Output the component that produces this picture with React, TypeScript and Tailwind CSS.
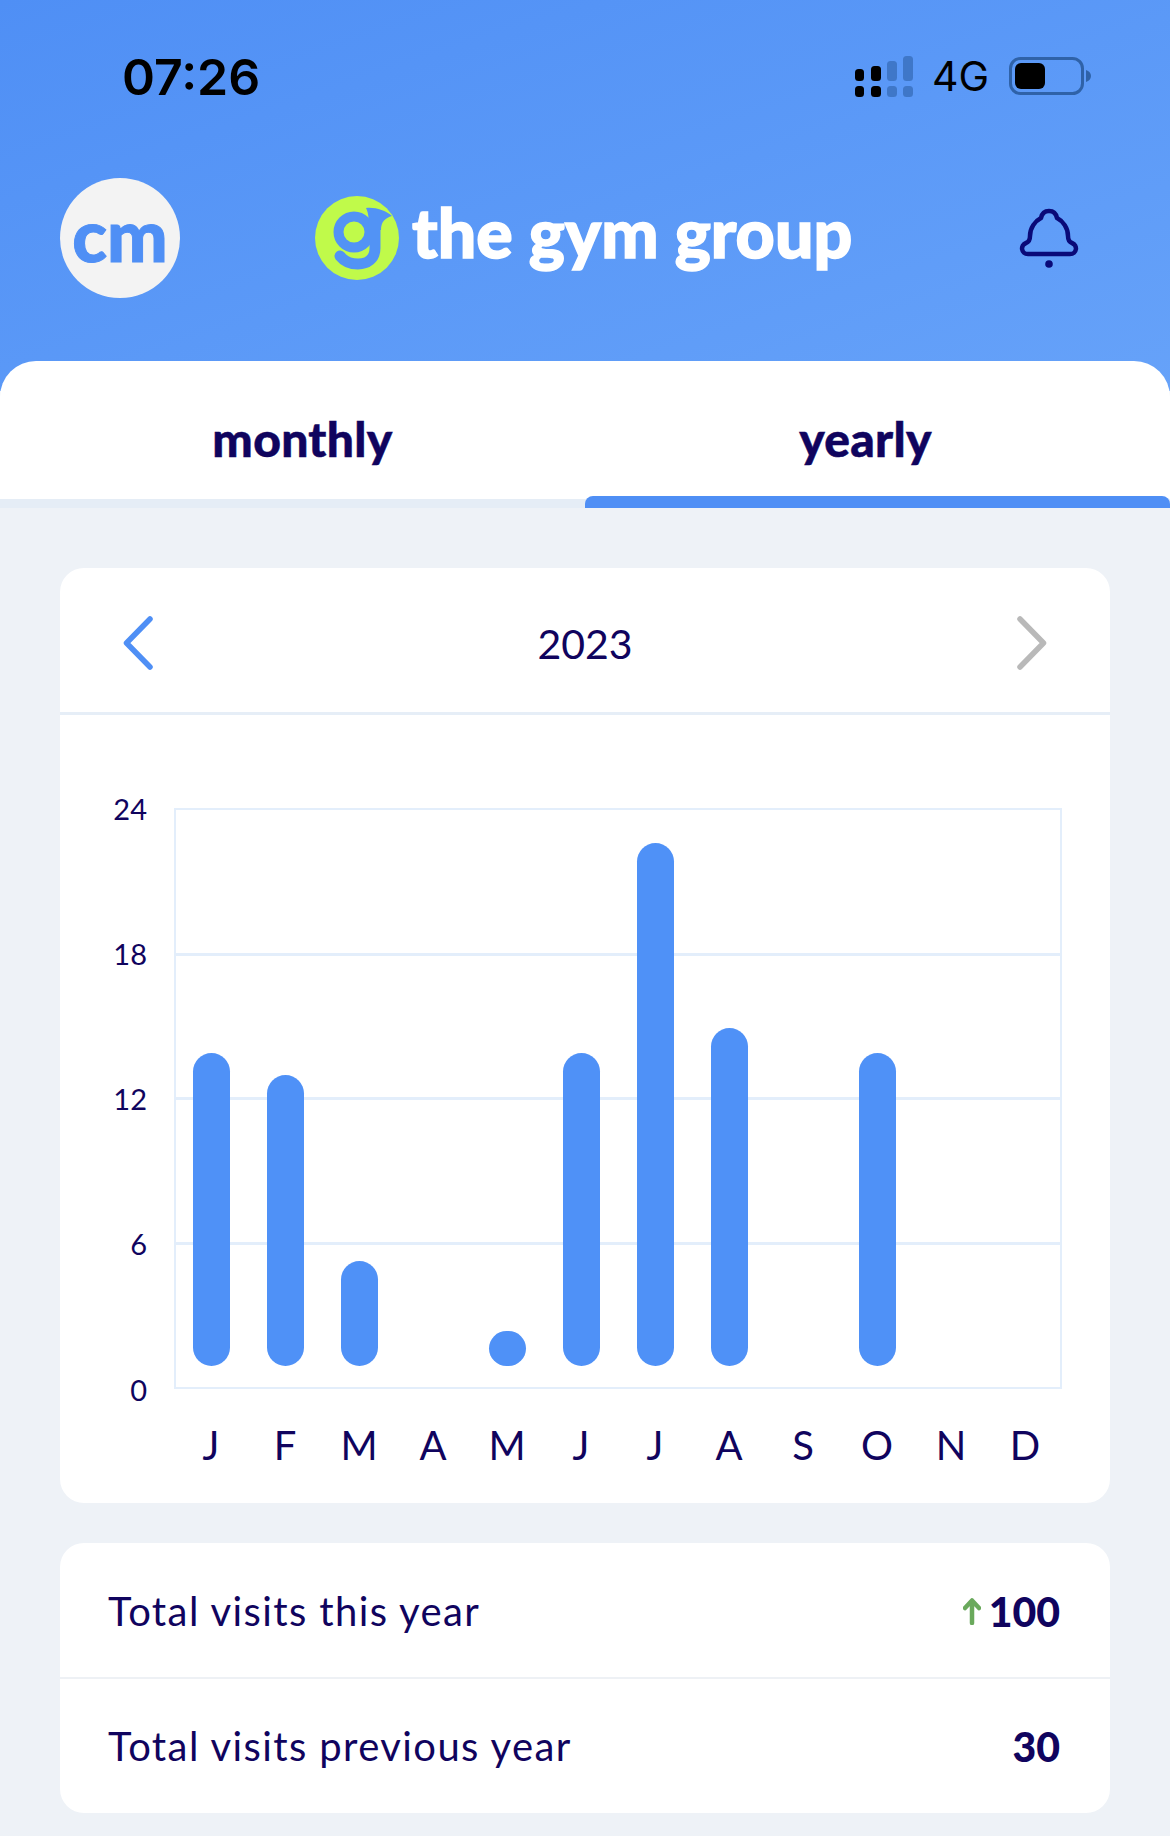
const months = ["J", "F", "M", "A", "M", "J", "J", "A", "S", "O", "N", "D"];
const bars = [
  "h-[313px]",
  "h-[291px]",
  "h-[105px]",
  "",
  "h-[35px]",
  "h-[313px]",
  "h-[523px]",
  "h-[338px]",
  "",
  "h-[313px]",
  "",
  "",
];
const yTicks = ["24", "18", "12", "6", "0"];

function Signal() {
  return (
    <svg width="58" height="41" viewBox="0 0 58 41">
      <rect x="0" y="13" width="9" height="12" rx="3.5" fill="#000" />
      <rect x="0" y="30" width="9" height="11" rx="3.5" fill="#000" />
      <rect x="16" y="10" width="10" height="15" rx="3.5" fill="#000" />
      <rect x="16" y="30" width="10" height="11" rx="3.5" fill="#000" />
      <rect x="32" y="5" width="10" height="20" rx="3.5" fill="#3f77c8" />
      <rect x="32" y="30" width="10" height="11" rx="3.5" fill="#3f77c8" />
      <rect x="48" y="0" width="10" height="25" rx="3.5" fill="#3f77c8" />
      <rect x="48" y="30" width="10" height="11" rx="3.5" fill="#3f77c8" />
    </svg>
  );
}

function Battery() {
  return (
    <svg width="82" height="38" viewBox="0 0 82 38">
      <rect x="1.5" y="1.5" width="72" height="35" rx="10" fill="none" stroke="#2f62a8" strokeWidth="3" />
      <rect x="6" y="6" width="30" height="26" rx="6" fill="#000" />
      <path d="M77 13 C80 14 82 16 82 19 C82 22 80 24 77 25 Z" fill="#2f62a8" />
    </svg>
  );
}

function LogoMark() {
  return (
    <svg width="84" height="84" viewBox="0 0 84 84">
      <circle cx="42" cy="42" r="42" fill="#c0fa4a" />
      <circle cx="39" cy="36" r="15.5" fill="none" stroke="#5293f5" strokeWidth="10" />
      <path
        d="M60 30 L60 52 C60 63 52 68 43 68 C35 68 29 65 25 60"
        fill="none"
        stroke="#5293f5"
        strokeWidth="11"
        strokeLinecap="round"
      />
      <path d="M54 34 C54 26 54 18 51 12 C60 11 70 14 77 20 C70 22 66 26 66 34 Z" fill="#5293f5" />
    </svg>
  );
}

function Bell() {
  return (
    <svg width="60" height="60" viewBox="0 0 60 60" fill="none">
      <path
        d="M9 46 H51 C58 46 59 37 53 35 C50 34 49 32 49 28 C49 20 44 13 38 10 C37 5 34 3 30 3 C26 3 23 5 22 10 C16 13 11 20 11 28 C11 32 10 34 7 35 C1 37 2 46 9 46 Z"
        stroke="#0a0a78"
        strokeWidth="4.5"
        strokeLinejoin="round"
      />
      <circle cx="30" cy="56" r="3.8" fill="#0a0a78" />
    </svg>
  );
}

function Chevron({ dir, color }: { dir: "left" | "right"; color: string }) {
  return (
    <svg width="30" height="54" viewBox="0 0 30 54" fill="none">
      <path
        d={dir === "left" ? "M27 3 L3.5 27 L27 51" : "M3 3 L26.5 27 L3 51"}
        stroke={color}
        strokeWidth="5.5"
        strokeLinecap="round"
        strokeLinejoin="round"
      />
    </svg>
  );
}

function UpArrow() {
  return (
    <svg width="18" height="27" viewBox="0 0 18 27" fill="none">
      <path d="M9 25 V3 M2 10 L9 2.5 L16 10" stroke="#6aa95c" strokeWidth="4.5" strokeLinecap="round" strokeLinejoin="round" />
    </svg>
  );
}

export default function App() {
  return (
    <div className="w-[1170px] h-[1836px] overflow-hidden flex flex-col bg-[#eef2f7] text-[#10045e] font-['Lato',sans-serif]">
      <header className="h-[391px] shrink-0 bg-gradient-to-br from-[#4f8ff5] to-[#66a2f9] -mb-[30px]">
        <div className="h-[152px] flex items-center pl-[122px] pr-[79px]">
          <span className="font-['Inter',sans-serif] font-semibold text-[50px] leading-none text-black mt-[2px]">07:26</span>
          <div className="ml-auto flex items-center">
            <Signal />
            <span className="ml-[19px] font-['Inter',sans-serif] text-[41px] leading-none text-black">4G</span>
            <span className="ml-[20px] flex">
              <Battery />
            </span>
          </div>
        </div>
        <div className="mt-[26px] flex items-center pl-[60px]">
          <div className="w-[120px] h-[120px] rounded-full bg-[#f3f3f3] flex items-center justify-center">
            <span className="text-[72px] leading-none font-black text-[#4f8ff5] -mt-[9px] [-webkit-text-stroke:1px_#4f8ff5]">cm</span>
          </div>
          <div className="ml-[135px]">
            <LogoMark />
          </div>
          <span className="ml-[13px] w-[442px] whitespace-nowrap text-[68px] leading-none font-black text-white -mt-[13px] [-webkit-text-stroke:1.5px_white]">
            the gym group
          </span>
          <div className="ml-[165px]">
            <Bell />
          </div>
        </div>
      </header>

      <div className="relative h-[147px] shrink-0 rounded-t-[36px] bg-white overflow-hidden flex">
        <div className="w-[585px] h-[138px] pl-[20px] pt-[18px] flex items-center justify-center text-[48px] leading-none font-black tracking-[0.3px] [-webkit-text-stroke:0.5px_#10045e]">
          monthly
        </div>
        <div className="w-[585px] h-[138px] pr-[24px] pt-[18px] flex items-center justify-center text-[48px] leading-none font-black tracking-[0.3px] [-webkit-text-stroke:0.5px_#10045e]">
          yearly
        </div>
        <div className="absolute left-0 bottom-0 w-full h-[9px] bg-[#e5edf6]" />
        <div className="absolute right-0 bottom-0 w-[585px] h-[12px] rounded-t-[8px] bg-[#4f8ff5]" />
      </div>

      <main className="flex flex-col px-[60px] pt-[60px] gap-[40px]">
        <section className="h-[935px] rounded-[24px] bg-white flex flex-col">
          <div className="h-[147px] shrink-0 flex items-center justify-between px-[63px] pt-[6px] border-b-[3px] border-[#e6eef7]">
            <Chevron dir="left" color="#4f8ff5" />
            <span className="text-[41px] leading-none">2023</span>
            <Chevron dir="right" color="#b9b9b9" />
          </div>
          <div className="pt-[93px] flex">
            <div className="w-[87px] h-[581px] flex flex-col justify-between items-end text-[29px] leading-none">
              {yTicks.map((t) => (
                <span key={t} className="h-0 flex items-center">
                  {t}
                </span>
              ))}
            </div>
            <div className="ml-[27px] w-[888px] flex flex-col">
              <div className="relative h-[581px] border-2 border-[#e3eefb] flex flex-col">
                <div className="h-[146px] border-b-[3px] border-[#e3eefb]" />
                <div className="h-[144px] border-b-[3px] border-[#e3eefb]" />
                <div className="h-[145px] border-b-[3px] border-[#e3eefb]" />
                <div className="flex-1" />
                <div className="absolute inset-y-0 -inset-x-[2px] pb-[21px] grid grid-cols-12 items-end justify-items-center">
                  {bars.map((h, i) => (
                    <div key={i} className={h ? `w-[37px] rounded-full bg-[#4f91f7] ${h}` : "w-[37px]"} />
                  ))}
                </div>
              </div>
              <div className="mt-[36px] grid grid-cols-12 justify-items-center text-[40px] leading-none">
                {months.map((m, i) => (
                  <span key={i}>{m}</span>
                ))}
              </div>
            </div>
          </div>
        </section>

        <section className="rounded-[24px] bg-white flex flex-col">
          <div className="h-[136px] pt-[2px] flex items-center justify-between pl-[48px] pr-[50px] border-b-2 border-[#eef1f5]">
            <span className="text-[40px] leading-none tracking-[1.4px]">Total visits this year</span>
            <span className="flex items-center gap-[8px]">
              <UpArrow />
              <span className="text-[41px] leading-none font-black">100</span>
            </span>
          </div>
          <div className="h-[134px] flex items-center justify-between pl-[48px] pr-[50px]">
            <span className="text-[40px] leading-none tracking-[1.4px]">Total visits previous year</span>
            <span className="text-[41px] leading-none font-black">30</span>
          </div>
        </section>
      </main>
    </div>
  );
}
